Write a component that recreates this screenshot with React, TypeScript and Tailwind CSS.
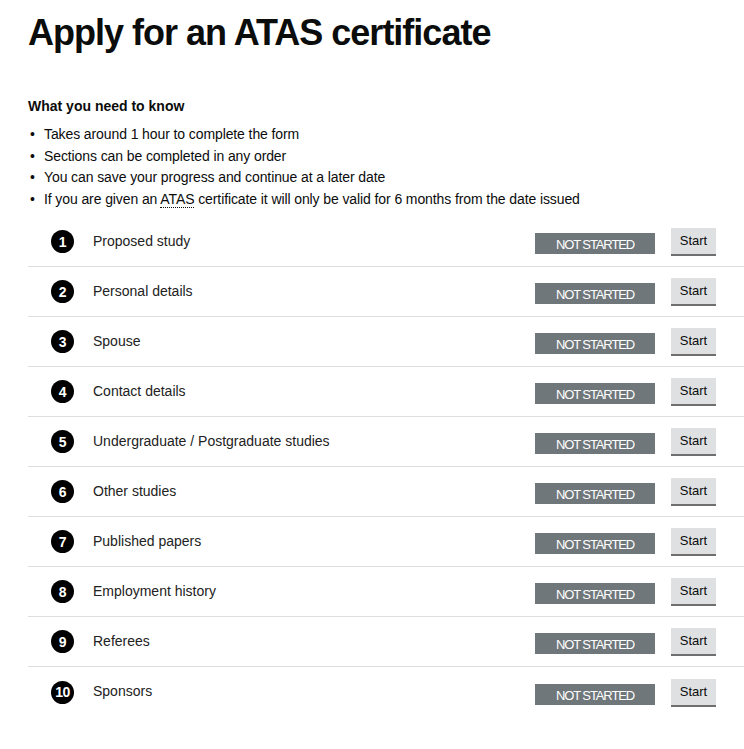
import React from "react";

const sections = [
  "Proposed study",
  "Personal details",
  "Spouse",
  "Contact details",
  "Undergraduate / Postgraduate studies",
  "Other studies",
  "Published papers",
  "Employment history",
  "Referees",
  "Sponsors",
];

const bullets = [
  "Takes around 1 hour to complete the form",
  "Sections can be completed in any order",
  "You can save your progress and continue at a later date",
];

export default function App() {
  return (
    <div
      className="min-h-[749px] w-full bg-white text-[#0b0c0c]"
      style={{ fontFamily: '"Liberation Sans", Arial, sans-serif' }}
    >
      <div className="pl-[28px]">
        <h1 className="pt-[11px] text-[36px] font-bold leading-[44px] tracking-[-1px]">
          Apply for an ATAS certificate
        </h1>
        <h2 className="mt-[41px] text-[14px] font-bold leading-[20px]">What you need to know</h2>
        <ul className="mt-[8px] text-[14px] leading-[21.7px] tracking-[-0.1px]">
          {bullets.map((b) => (
            <li key={b} className="flex">
              <span className="w-[16px] pl-[2px]">•</span>
              <span>{b}</span>
            </li>
          ))}
          <li className="flex">
            <span className="w-[16px] pl-[2px]">•</span>
            <span>
              If you are given an{" "}
              <abbr className="no-underline border-b border-dotted border-[#0b0c0c]" title="Academic Technology Approval Scheme">
                ATAS
              </abbr>{" "}
              certificate it will only be valid for 6 months from the date issued
            </span>
          </li>
        </ul>
        <ol className="mt-[6px]">
          {sections.map((s, i) => (
            <li
              key={s}
              className={`flex h-[50px] items-center ${i < sections.length - 1 ? "border-b border-[#dedede]" : ""}`}
            >
              <span className="ml-[23px] mt-[1px] flex h-[23px] w-[23px] items-center justify-center rounded-full bg-black text-[14px] font-bold leading-none text-white tracking-[-0.5px]">
                {i + 1}
              </span>
              <span className="ml-[19px] flex-1 text-[14px] text-[#222]">{s}</span>
              <span className="mt-[5px] flex h-[21px] w-[120px] items-end justify-center bg-[#6f777b] pb-[1px] text-[13px] leading-[16px] text-white tracking-[-1.1px]">
                NOT STARTED
              </span>
              <button className="ml-[16px] mr-[28px] mt-[2px] flex h-[28px] w-[45px] items-start justify-center border-b-2 border-[#6f6f6f] bg-[#dee0e2] pt-[5px] text-[13px] leading-[16px] text-[#0b0c0c]">
                Start
              </button>
            </li>
          ))}
        </ol>
      </div>
    </div>
  );
}
